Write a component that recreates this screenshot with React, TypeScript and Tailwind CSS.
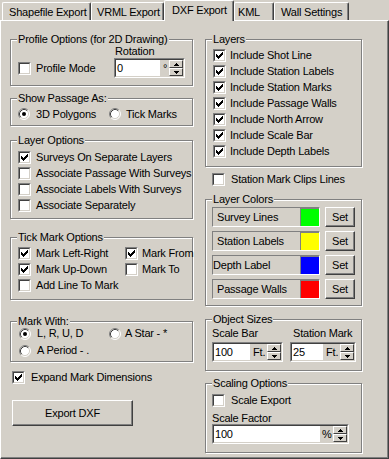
import React from "react";

// classic win2000 dialog, DXF export tab

function CheckMark() {
  const tops = [2, 3, 4, 3, 2, 1, 0];
  return (
    <svg width="7" height="7" viewBox="0 0 7 7" shapeRendering="crispEdges">
      {tops.map((t, i) => (
        <rect key={i} x={i} y={t} width="1" height="3" fill="#000" />
      ))}
    </svg>
  );
}

function Check({ on = false }: { on?: boolean }) {
  return (
    <span className="flex w-[13px] h-[13px] shrink-0 border border-t-[#808080] border-l-[#808080] border-b-white border-r-white">
      <span className="flex flex-1 items-center justify-center bg-white border border-t-[#404040] border-l-[#404040] border-b-[#d4d0c8] border-r-[#d4d0c8]">
        {on && <CheckMark />}
      </span>
    </span>
  );
}

function Radio({ on = false }: { on?: boolean }) {
  return (
    <svg width="12" height="12" viewBox="0 0 12 12" className="shrink-0">
      <circle cx="6" cy="6" r="5" fill="#fff" />
      <path d="M2.11 9.89 A5.5 5.5 0 0 1 9.89 2.11" stroke="#808080" fill="none" />
      <path d="M9.89 2.11 A5.5 5.5 0 0 1 2.11 9.89" stroke="#fff" fill="none" />
      <path d="M2.82 9.18 A4.5 4.5 0 0 1 9.18 2.82" stroke="#404040" fill="none" />
      <path d="M9.18 2.82 A4.5 4.5 0 0 1 2.82 9.18" stroke="#d4d0c8" fill="none" />
      {on && <circle cx="6" cy="6" r="2" fill="#000" />}
    </svg>
  );
}

function Arrow({ up = false }: { up?: boolean }) {
  const rows = up ? [2, 1, 0] : [0, 1, 2];
  return (
    <svg width="5" height="3" viewBox="0 0 5 3" shapeRendering="crispEdges">
      {rows.map((x, y) => (
        <rect key={y} x={x} y={y} width={5 - x * 2} height="1" fill="#000" />
      ))}
    </svg>
  );
}

function Spin() {
  return (
    <span className="flex flex-col w-[14px] shrink-0">
      <span className="flex flex-1 items-center justify-center border border-t-white border-l-white border-b-[#404040] border-r-[#404040]">
        <Arrow up />
      </span>
      <span className="flex flex-1 items-center justify-center border border-t-white border-l-white border-b-[#404040] border-r-[#404040]">
        <Arrow />
      </span>
    </span>
  );
}

function Edit({ value, suffix, className, suffixClass }: { value: string; suffix: string; className: string; suffixClass: string }) {
  return (
    <div className={`flex h-[20px] border border-t-[#808080] border-l-[#808080] border-b-white border-r-white ${className}`}>
      <div className="flex flex-1 border border-t-[#404040] border-l-[#404040] border-b-[#d4d0c8] border-r-[#d4d0c8]">
        <div className="flex-1 bg-white pl-[1px] leading-[16px]">{value}</div>
        <div className={`leading-[16px] ${suffixClass}`}>{suffix}</div>
        <Spin />
      </div>
    </div>
  );
}

function Group({ title, className, children }: { title: string; className: string; children: React.ReactNode }) {
  return (
    <div className={`relative border border-[#808080] shadow-[inset_1px_1px_0_#fff,1px_1px_0_#fff] ${className}`}>
      <span className="absolute top-[-7px] left-[6px] bg-[#d4d0c8] px-[1px] leading-[13px]">{title}</span>
      {children}
    </div>
  );
}

function Btn({ className, children }: { className: string; children: React.ReactNode }) {
  return (
    <div className={`flex items-center justify-center bg-[#d4d0c8] border border-t-white border-l-white border-b-[#404040] border-r-[#404040] shadow-[inset_-1px_-1px_0_#808080] ${className}`}>
      {children}
    </div>
  );
}

const layers = [
  "Include Shot Line",
  "Include Station Labels",
  "Include Station Marks",
  "Include Passage Walls",
  "Include North Arrow",
  "Include Scale Bar",
  "Include Depth Labels",
];

const layerColors = [
  { name: "Survey Lines", color: "bg-[#00ff00]", pad: "pl-[4px]" },
  { name: "Station Labels", color: "bg-[#ffff00]", pad: "pl-[4px]" },
  { name: "Depth Label", color: "bg-[#0000ff]", pad: "pl-0" },
  { name: "Passage Walls", color: "bg-[#ff0000]", pad: "pl-[4px]" },
];

const tabBase =
  "border-t border-l border-r border-t-white border-l-white border-r-[#404040] shadow-[inset_-1px_0_0_#808080] rounded-t-[2px] bg-[#d4d0c8]";

export default function App() {
  return (
    <div className="w-[389px] h-[459px] bg-[#d4d0c8] flex flex-col overflow-hidden whitespace-nowrap font-['Liberation_Sans',Arial,sans-serif] text-[11px] leading-[13px] tracking-[-0.2px] text-black select-none">
      {/* Tabs */}
      <div className="relative z-10 flex items-end h-[20px] pl-[2px]">
        <div className={`${tabBase} h-[18px] w-[89px] pl-[6px] pt-[3px]`}>Shapefile Export</div>
        <div className={`${tabBase} h-[18px] w-[73px] pl-[5px] pt-[3px]`}>VRML Export</div>
        <div className={`${tabBase} h-[21px] w-[70px] pl-[7px] pt-[3px] -mb-[1px]`}>DXF Export</div>
        <div className={`${tabBase} h-[18px] w-[40px] pl-[3px] pt-[3px]`}>KML</div>
        <div className={`${tabBase} h-[18px] w-[75px] pl-[6px] pt-[3px]`}>Wall Settings</div>
      </div>

      {/* Panel */}
      <div className="flex-1 flex items-start gap-[12px] pl-[9px] pt-[18px] border border-t-white border-l-white border-r-[#404040] border-b-[#404040] shadow-[inset_-1px_-1px_0_#808080]">
        {/* Left column */}
        <div className="flex flex-col w-[183px]">
          <Group title="Profile Options (for 2D Drawing)" className="h-[47px] pt-[5px] pl-[7px]">
            <div className="flex items-end">
              <div className="flex items-center h-[20px] w-[96px] gap-[5px]">
                <Check />
                <span>Profile Mode</span>
              </div>
              <div className="flex flex-col">
                <span className="pl-[1px]">Rotation</span>
                <Edit value="0" suffix="°" className="w-[71px]" suffixClass="w-[9px] pl-[3px]" />
              </div>
            </div>
          </Group>

          <Group title="Show Passage As:" className="mt-[12px] h-[28px] pt-[8px] pl-[7px]">
            <div className="flex items-center h-[14px]">
              <div className="flex items-center gap-[6px] w-[91px]">
                <Radio on />
                <span>3D Polygons</span>
              </div>
              <div className="flex items-center gap-[5px]">
                <Radio />
                <span>Tick Marks</span>
              </div>
            </div>
          </Group>

          <Group title="Layer Options" className="mt-[14px] h-[79px] pt-[8px] pl-[7px]">
            {[
              ["Surveys On Separate Layers", true],
              ["Associate Passage With Surveys", false],
              ["Associate Labels With Surveys", false],
              ["Associate Separately", false],
            ].map(([label, on]) => (
              <div key={label as string} className="flex items-center h-[16px] gap-[5px]">
                <Check on={on as boolean} />
                <span>{label}</span>
              </div>
            ))}
          </Group>

          <Group title="Tick Mark Options" className="mt-[18px] h-[63px] pt-[7px] pl-[7px]">
            <div className="grid grid-cols-[107px_1fr]">
              <div className="flex items-center h-[16px] gap-[5px]"><Check on /><span>Mark Left-Right</span></div>
              <div className="flex items-center h-[16px] gap-[4px]"><Check on /><span>Mark From</span></div>
              <div className="flex items-center h-[16px] gap-[5px]"><Check on /><span>Mark Up-Down</span></div>
              <div className="flex items-center h-[16px] gap-[4px]"><Check /><span>Mark To</span></div>
              <div className="flex items-center h-[16px] gap-[5px] col-span-2"><Check /><span>Add Line To Mark</span></div>
            </div>
          </Group>

          <Group title="Mark With:" className="mt-[21px] h-[41px] pt-[3px] pl-[8px]">
            <div className="flex items-center h-[17px]">
              <div className="flex items-center gap-[6px] w-[90px]"><Radio on /><span>L, R, U, D</span></div>
              <div className="flex items-center gap-[4px]"><Radio /><span>A Star - *</span></div>
            </div>
            <div className="flex items-center h-[17px] gap-[6px]">
              <Radio />
              <span>A Period - .</span>
            </div>
          </Group>

          <div className="flex items-center mt-[9px] ml-[2px] h-[13px] gap-[6px]">
            <Check on />
            <span>Expand Mark Dimensions</span>
          </div>

          <Btn className="mt-[16px] ml-[2px] w-[121px] h-[26px]">Export DXF</Btn>
        </div>

        {/* Right column */}
        <div className="flex flex-col w-[157px]">
          <Group title="Layers" className="h-[128px] pt-[7px] pl-[7px]">
            {layers.map((l) => (
              <div key={l} className="flex items-center h-[16px] gap-[4px]">
                <Check on />
                <span>{l}</span>
              </div>
            ))}
          </Group>

          <div className="flex items-center mt-[6px] ml-[7px] h-[13px] gap-[6px]">
            <Check />
            <span>Station Mark Clips Lines</span>
          </div>

          <Group title="Layer Colors" className="mt-[13px] h-[107px] pt-[7px] pl-[6px]">
            <div className="flex flex-col gap-[4px]">
              {layerColors.map((c) => (
                <div key={c.name} className="flex items-center h-[20px]">
                  <div className="flex h-[20px] w-[108px] border border-t-[#808080] border-l-[#808080] border-b-white border-r-white">
                    <div className={`flex-1 flex items-center ${c.pad}`}>{c.name}</div>
                    <div className={`w-[19px] border-t border-l border-[#808080] ${c.color}`} />
                  </div>
                  <Btn className="ml-[5px] w-[30px] h-[20px]">Set</Btn>
                </div>
              ))}
            </div>
          </Group>

          <Group title="Object Sizes" className="mt-[13px] h-[52px] pt-[7px] pl-[6px]">
            <div className="flex gap-[7px]">
              <div className="flex flex-col gap-[2px]">
                <span>Scale Bar</span>
                <Edit value="100" suffix="Ft." className="w-[71px]" suffixClass="w-[17px] pl-[3px]" />
              </div>
              <div className="flex flex-col gap-[2px]">
                <span className="pl-[3px]">Station Mark</span>
                <Edit value="25" suffix="Ft." className="w-[66px]" suffixClass="w-[17px] pl-[3px]" />
              </div>
            </div>
          </Group>

          <Group title="Scaling Options" className="mt-[12px] h-[70px] pt-[10px] pl-[6px]">
            <div className="flex items-center h-[13px] gap-[6px]">
              <Check />
              <span>Scale Export</span>
            </div>
            <div className="mt-[5px] h-[12px] leading-[12px]">Scale Factor</div>
            <Edit value="100" suffix="%" className="w-[137px]" suffixClass="w-[13px] pl-[2px]" />
          </Group>
        </div>
      </div>
    </div>
  );
}
